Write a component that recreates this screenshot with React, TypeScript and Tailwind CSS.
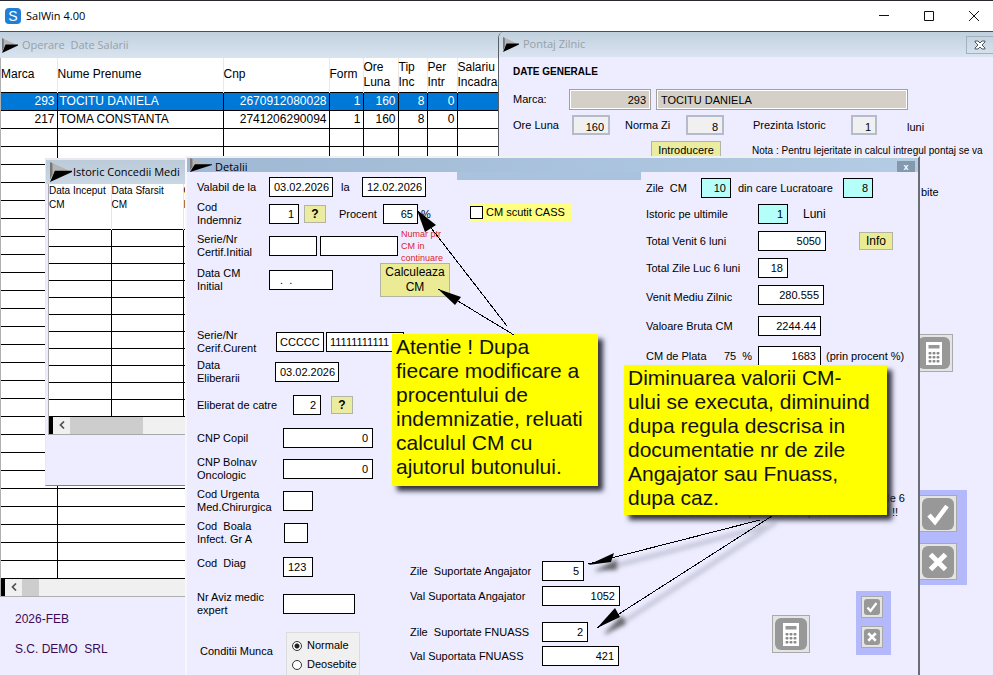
import React from "react";

const FIELD = "rounded-none border border-black bg-white text-[11px] leading-none text-black outline-none";

function Field({ label, value = "", className = "", align = "px-1 text-right" }: { label: string; value?: string; className?: string; align?: string }) {
  return <input aria-label={label} defaultValue={value} className={`${FIELD} h-5 shrink-0 ${align} ${className}`} />;
}

function Row({ className = "", children }: { className?: string; children: React.ReactNode }) {
  return <div className={`flex h-6 items-center whitespace-nowrap ${className}`}>{children}</div>;
}

function Label({ lines, className = "" }: { lines: string[]; className?: string }) {
  return (
    <div className={`shrink-0 whitespace-pre text-[11px] leading-[13px] ${className}`}>
      {lines.map((l) => (
        <div key={l}>{l}</div>
      ))}
    </div>
  );
}

function Flag({ className = "" }: { className?: string }) {
  return (
    <svg aria-hidden="true" viewBox="0 0 18 16" preserveAspectRatio="none" className={`shrink-0 ${className}`}>
      <polygon points="0,0 16,7 4,7.500 0,14" fill="#b4b4b4" />
      <polygon points="0,0 2,1 2,10 0,14" fill="#777" />
      <polygon points="0,16 4,7 18,7 18,8" fill="#000" />
    </svg>
  );
}

function CalcIcon({ className = "" }: { className?: string }) {
  return (
    <svg aria-hidden="true" viewBox="0 0 32 32" className={className}>
      <rect width="32" height="32" rx="6" fill="#989898" />
      <rect x="8" y="5" width="16" height="23" fill="#fff" />
      <rect x="10.500" y="8" width="11" height="3.500" fill="#989898" />
      {[15, 19, 23].map((y) =>
        [10.5, 14.5, 18.5].map((x) => <rect key={`${x}-${y}`} x={x} y={y} width="3" height="2.500" rx="1" fill="#8a8a8a" />)
      )}
    </svg>
  );
}

function CheckIcon({ className = "" }: { className?: string }) {
  return (
    <svg aria-hidden="true" viewBox="0 0 32 32" className={className}>
      <rect width="32" height="32" rx="6" fill="#989898" />
      <path d="M7 17 L13 24 L25 8" fill="none" stroke="#fff" strokeWidth="4.500" />
    </svg>
  );
}

function CrossIcon({ className = "" }: { className?: string }) {
  return (
    <svg aria-hidden="true" viewBox="0 0 32 32" className={className}>
      <rect width="32" height="32" rx="6" fill="#989898" />
      <path d="M8.500 8.500 L23.500 23.500 M23.500 8.500 L8.500 23.500" fill="none" stroke="#fff" strokeWidth="5" />
    </svg>
  );
}

function IconButton({ label, className = "", children }: { label: string; className?: string; children: React.ReactNode }) {
  return (
    <button aria-label={label} className={`flex shrink-0 items-center justify-center border border-[#a9a9a9] bg-[#e4e4e4] ${className}`}>
      {children}
    </button>
  );
}

function ScrollBar({ thumb }: { thumb: string }) {
  return (
    <div className="flex h-[17px] bg-[#f0f0f0]">
      <div className="w-1 shrink-0 bg-black" />
      <button aria-label="Deruleaza stanga" className="flex w-[17px] shrink-0 items-center justify-center">
        <svg aria-hidden="true" viewBox="0 0 6 8" className="h-2 w-[6px]">
          <path d="M5 0.500 L1.500 4 L5 7.500" fill="none" stroke="#505050" strokeWidth="1.700" />
        </svg>
      </button>
      <div className={`bg-[#cdcdcd] ${thumb}`} />
    </div>
  );
}

const GRID_HEAD: [string[], string][] = [
  [["Marca"], "w-[56px]"],
  [["Nume Prenume"], "w-[166px]"],
  [["Cnp"], "w-[106px]"],
  [["Form"], "w-[34px]"],
  [["Ore", "Luna"], "w-[35px]"],
  [["Tip", "Inc"], "w-[29px]"],
  [["Per", "Intr"], "w-[30px]"],
  [["Salariu", "Incadra"], "w-[60px]"],
];

const GRID_ROWS: string[][] = [
  ["293", "TOCITU DANIELA", "2670912080028", "1", "160", "8", "0", ""],
  ["217", "TOMA CONSTANTA", "2741206290094", "1", "160", "8", "0", ""],
  ...Array.from({ length: 25 }, () => Array(8).fill("")),
];

function EmployeesWindow() {
  return (
    <section className="absolute left-0 top-0 w-[516px]">
      <header className="flex h-[26px] items-center gap-1 bg-linear-to-b from-[#c1d0de] to-[#d9e4f0] pl-[2px]">
        <Flag className="h-[15px] w-4" />
        <h2 className="whitespace-pre font-['Open_Sans','Noto_Sans',sans-serif] text-[11px] text-[#97a0a8]">Operare  Date Salarii</h2>
      </header>
      <div className="border-b border-l border-[#b0b0b0]">
        <table className="w-full table-fixed border-collapse bg-white">
          <thead>
            <tr className="h-[34px] border-b border-black">
              {GRID_HEAD.map(([lines, w]) => (
                <th key={lines[0]} className={`${w} border-r border-[#f0e4e4] p-0 text-left text-[12px] font-normal leading-[15px]`}>
                  {lines.map((l) => (
                    <div key={l}>{l}</div>
                  ))}
                </th>
              ))}
            </tr>
          </thead>
          <tbody>
            {GRID_ROWS.map((r, i) => (
              <tr key={i} className={`h-[18px] ${i === 0 ? "bg-[#0078d7] text-white" : ""}`}>
                {r.map((c, j) => (
                  <td key={j} className={`whitespace-nowrap border-b border-r border-black p-0 px-[2px] text-[12px] leading-[17px] ${j === 1 ? "text-left" : "text-right"}`}>
                    {c}
                  </td>
                ))}
              </tr>
            ))}
          </tbody>
        </table>
        <ScrollBar thumb="w-[17px]" />
      </div>
      <div className="flex flex-col gap-[15px] pl-[15px] pt-[15px] text-[12px] leading-[15px] text-[#3d0a52]">
        <p>2026-FEB</p>
        <p className="whitespace-pre">S.C. DEMO  SRL</p>
      </div>
    </section>
  );
}

function TimesheetWindow() {
  const box = "border-2 border-[#b4bccb] bg-[#f0f0f0] text-right text-[11px] h-5 px-1 pt-1 outline-none";
  return (
    <section className="absolute bottom-0 left-[498px] right-0 top-0 rounded-tl-md border-l border-[#5a5f66] bg-[#ededff]">
      <header className="flex h-[25px] items-center gap-1 rounded-tl-md bg-linear-to-b from-[#c1d0de] to-[#d9e4f0] pl-1">
        <Flag className="h-[15px] w-4" />
        <h2 className="font-['Open_Sans','Noto_Sans',sans-serif] text-[11px] text-[#97a0a8]">Pontaj Zilnic</h2>
        <button aria-label="Inchide Pontaj" className="ml-auto flex h-[18px] w-[27px] items-center justify-center border border-r-0 border-[#a3b1bf]">
          <svg aria-hidden="true" viewBox="0 0 12 10" className="h-[10px] w-3">
            <path d="M1 1 H4 L6 3 L8 1 H11 V2 L8 5 L11 8 V9 H8 L6 7 L4 9 H1 V8 L4 5 L1 2 Z" fill="#fff" stroke="#4f565e" />
          </svg>
        </button>
      </header>
      <div className="pl-[14px] pt-2 text-[11px] leading-[13px]">
        <h3 className="text-[10px] font-bold">DATE GENERALE</h3>
        <div className="mt-[11px] flex items-center">
          <label htmlFor="marca" className="w-[56px]">Marca:</label>
          <input id="marca" readOnly defaultValue="293" className="h-[21px] w-[82px] border border-[#a0a0a0] bg-[#d4d0c8] px-1 text-right outline outline-1 -outline-offset-2 outline-white" />
          <input aria-label="Nume" readOnly defaultValue="TOCITU DANIELA" className="ml-[5px] h-[21px] w-[252px] border border-[#a0a0a0] bg-[#d4d0c8] px-1 outline outline-1 -outline-offset-2 outline-white" />
        </div>
        <div className="mt-[5px] flex h-5 items-center whitespace-nowrap">
          <label htmlFor="ore" className="w-[59px]">Ore Luna</label>
          <input id="ore" defaultValue="160" className={`w-[38px] ${box}`} />
          <label htmlFor="norma" className="ml-[15px] w-[61px]">Norma Zi</label>
          <input id="norma" defaultValue="8" className={`w-[38px] ${box}`} />
          <label htmlFor="istoric" className="ml-[29px] w-[98px]">Prezinta Istoric</label>
          <input id="istoric" defaultValue="1" className={`w-[26px] ${box}`} />
          <span className="ml-[30px] pt-1">luni</span>
        </div>
        <div className="mt-[6px] flex items-center whitespace-nowrap pl-[138px]">
          <button className="h-[18px] w-[70px] shrink-0 border border-[#b4b4a4] bg-[#ececa0]">Introducere</button>
          <span className="ml-[31px] text-[10px]">Nota : Pentru lejeritate in calcul intregul pontaj se va</span>
        </div>
        <p className="mt-[27px] pl-[408px]">bite</p>
      </div>
      <div className="mt-[135px] flex flex-col items-start pl-[416px]">
        <IconButton label="Calculator pontaj" className="h-[38px] w-[38px]">
          <CalcIcon className="h-8 w-8" />
        </IconButton>
        <div className="mt-[118px] flex w-[52px] flex-col gap-[11px] bg-[#b3b9fb] py-[5px] pl-1">
          <IconButton label="Confirma pontaj" className="h-[37px] w-[38px]">
            <CheckIcon className="h-8 w-8" />
          </IconButton>
          <IconButton label="Anuleaza pontaj" className="h-[37px] w-[38px]">
            <CrossIcon className="h-8 w-8" />
          </IconButton>
        </div>
      </div>
    </section>
  );
}

function HistoryWindow() {
  return (
    <section className="absolute left-[45px] top-[126px] w-[152px] border border-t-2 border-[#e8e8ee] border-b-[#808080] bg-[#ededff] pb-[50px] pl-[2px]">
      <header className="-ml-[2px] flex h-6 items-center gap-px bg-linear-to-b from-[#bccbd9] to-[#c9d6e3] pl-1">
        <Flag className="h-5 w-[22px]" />
        <h2 className="whitespace-nowrap font-['Open_Sans','Noto_Sans',sans-serif] text-[11px]">Istoric Concedii Medi</h2>
      </header>
      <div className="border-b border-l border-[#a8a8a8] bg-white">
        <table className="w-full table-fixed border-collapse">
          <thead>
            <tr className="h-[45px] border-b border-black align-top">
              <th className="w-[62px] whitespace-nowrap border-r border-[#e8e4e4] p-0 text-left text-[10px] font-normal leading-[14px]">Data Inceput<br />CM</th>
              <th className="w-[72px] whitespace-nowrap border-r border-[#e8e4e4] p-0 text-left text-[10px] font-normal leading-[14px]">Data Sfarsit<br />CM</th>
              <th className="p-0 text-left text-[10px] font-normal leading-[14px]">C<br />I</th>
            </tr>
          </thead>
          <tbody>
            {Array.from({ length: 11 }, (_, i) => (
              <tr key={i} className="h-[17px]">
                <td className="border-b border-r border-black p-0" />
                <td className="border-b border-r border-black p-0" />
                <td className="border-b border-black p-0" />
              </tr>
            ))}
          </tbody>
        </table>
        <ScrollBar thumb="w-[73px]" />
      </div>
    </section>
  );
}

function HelpButton() {
  return <button aria-label="Ajutor" className="h-[18px] w-[22px] border border-[#b4b4a4] bg-[#ececa0] text-[12px] font-bold leading-none">?</button>;
}

function DetailWindow() {
  return (
    <section className="absolute bottom-0 left-[185px] top-[124px] w-[735px] overflow-hidden border-l-2 border-r-2 border-t-2 border-l-[#f6f6fc] border-r-[#6b6d75] border-t-[#f0f0f0] bg-[#ededff]">
      <header className="flex h-[14px] bg-linear-to-r from-[#9fb8d3] to-[#b4cce4] pl-[3px]">
        <Flag className="h-[14px] w-[22px]" />
        <h2 className="ml-[3px] font-['Open_Sans','Noto_Sans',sans-serif] text-[11px] leading-[18px]">Detalii</h2>
        <button aria-label="Inchide Detalii" className="ml-auto mr-[3px] mt-[3px] h-[11px] w-[18px] bg-[#8499ac] text-[9px] font-bold leading-[10px] text-white">x</button>
      </header>

      <div className="flex h-[378px]">
        <div className="w-[270px] shrink-0 pl-[10px]">
          <Row className="mt-[3px]">
            <Label lines={["Valabil de la"]} className="w-[72px]" />
            <Field label="Valabil de la" value="03.02.2026" align="pl-1" className="w-[64px]" />
            <Label lines={["la"]} className="ml-2 w-[21px]" />
            <Field label="Valabil pana la" value="12.02.2026" align="pl-1" className="w-[64px]" />
          </Row>
          <Row className="mt-[3px]">
            <Label lines={["Cod", "Indemniz"]} className="w-[72px]" />
            <Field label="Cod indemnizatie" value="1" className="mr-[5px] w-[30px]" />
            <HelpButton />
            <Label lines={["Procent"]} className="ml-[13px] w-[44px]" />
            <Field label="Procent" value="65" className="w-[35px]" />
            <Label lines={["%"]} className="ml-[3px]" />
          </Row>
          <Row className="mt-2">
            <Label lines={["Serie/Nr", "Certif.Initial"]} className="w-[72px]" />
            <Field label="Serie certificat initial" className="w-12" />
            <Field label="Numar certificat initial" className="ml-[3px] w-[78px]" />
            <p className="ml-[3px] text-[9px] leading-3 text-[#e0202c]">Numar ptr<br />CM in<br />continuare</p>
          </Row>
          <Row className="mt-[10px]">
            <Label lines={["Data CM", "Initial"]} className="w-[72px]" />
            <Field label="Data CM initial" value="  .  ." align="pl-1" className="w-[64px]" />
            <button className="ml-[47px] h-[34px] w-[70px] shrink-0 border border-[#b4b4a4] bg-[#ebeb96] text-[12px] leading-[15px]">Calculeaza<br />CM</button>
          </Row>
          <Row className="mt-[38px]">
            <Label lines={["Serie/Nr", "Cerif.Curent"]} className="w-[79px]" />
            <Field label="Serie certificat curent" value="CCCCC" align="pl-[3px]" className="w-12" />
            <Field label="Numar certificat curent" value="11111111111" align="pl-[3px]" className="ml-[2px] w-[78px]" />
          </Row>
          <Row className="mt-[6px]">
            <Label lines={["Data", "Eliberarii"]} className="w-[78px]" />
            <Field label="Data eliberarii" value="03.02.2026" align="pl-1" className="w-[64px]" />
          </Row>
          <Row className="mt-[9px]">
            <Label lines={["Eliberat de catre"]} className="w-24" />
            <Field label="Eliberat de catre" value="2" className="mr-[10px] w-7" />
            <HelpButton />
          </Row>
          <Row className="mt-[9px]">
            <Label lines={["CNP Copil"]} className="w-[86px]" />
            <Field label="CNP Copil" value="0" className="w-[90px]" />
          </Row>
          <Row className="mt-[7px]">
            <Label lines={["CNP Bolnav", "Oncologic"]} className="w-[86px]" />
            <Field label="CNP Bolnav Oncologic" value="0" className="w-[90px]" />
          </Row>
          <Row className="mt-2">
            <Label lines={["Cod Urgenta", "Med.Chirurgica"]} className="w-[86px]" />
            <Field label="Cod Urgenta" className="w-[30px]" />
          </Row>
          <Row className="mt-2">
            <Label lines={["Cod  Boala", "Infect. Gr A"]} className="w-[87px]" />
            <Field label="Cod Boala" className="w-6" />
          </Row>
        </div>

        <div className="w-[188px] shrink-0">
          <div className="h-2 w-[184px] bg-[#a9c2dd]" />
          <label className="ml-[13px] mt-6 flex h-[17px] w-[101px] items-center gap-[3px] whitespace-nowrap bg-[#ffff80] text-[11px]">
            <input type="checkbox" className="h-[13px] w-[13px] shrink-0 appearance-none border border-black bg-white" />
            CM scutit CASS
          </label>
        </div>

        <div className="flex-1 pl-px">
          <Row className="mt-1">
            <Label lines={["Zile  CM"]} className="w-[55px]" />
            <Field label="Zile CM" value="10" className="w-[30px] bg-[#b4fffa]!" />
            <Label lines={["din care Lucratoare"]} className="ml-[7px] w-[105px]" />
            <Field label="Zile lucratoare" value="8" className="w-[30px] bg-[#b4fffa]!" />
          </Row>
          <Row className="mt-[2px]">
            <Label lines={["Istoric pe ultimile"]} className="w-[112px]" />
            <Field label="Istoric luni" value="1" className="w-[30px] bg-[#b4fffa]!" />
            <span className="ml-[15px] text-[12px]">Luni</span>
          </Row>
          <Row className="mt-[3px]">
            <Label lines={["Total Venit 6 luni"]} className="w-[112px]" />
            <Field label="Total Venit 6 luni" value="5050" className="w-[68px]" />
            <button className="ml-[33px] h-[18px] w-[34px] border border-[#b4b4a4] bg-[#ebeb96] text-[12px] leading-none">Info</button>
          </Row>
          <Row className="mt-[3px]">
            <Label lines={["Total Zile Luc 6 luni"]} className="w-[112px]" />
            <Field label="Total Zile Luc 6 luni" value="18" className="w-[30px]" />
          </Row>
          <Row className="mt-[3px]">
            <Label lines={["Venit Mediu Zilnic"]} className="w-[112px] pt-1" />
            <Field label="Venit Mediu Zilnic" value="280.555" className="w-[66px]" />
          </Row>
          <Row className="mt-[7px]">
            <Label lines={["Valoare Bruta CM"]} className="w-[112px]" />
            <Field label="Valoare Bruta CM" value="2244.44" className="w-[63px]" />
          </Row>
          <Row className="mt-[6px]">
            <Label lines={["CM de Plata"]} className="w-[78px]" />
            <Label lines={["75  %"]} className="w-[34px]" />
            <Field label="CM de Plata" value="1683" className="w-[63px]" />
            <Label lines={["(prin procent %)"]} className="ml-[5px]" />
          </Row>
          <p className="mr-[13px] mt-[123px] whitespace-nowrap text-right text-[11px] leading-[14px]">
            de 6
            <span className="mr-[7px] block">luni istoric incomplet, se completeaza manual !!</span>
          </p>
        </div>
      </div>

      <div className="flex">
        <div className="w-[223px] shrink-0 pl-[10px]">
          <Row className="mt-[5px]">
            <Label lines={["Cod  Diag"]} className="w-[86px] pb-2" />
            <Field label="Cod Diag" value="123" align="pl-1" className="w-[30px]" />
          </Row>
          <Row className="mt-[13px]">
            <Label lines={["Nr Aviz medic", "expert"]} className="w-[86px]" />
            <Field label="Nr Aviz medic expert" className="w-[72px]" />
          </Row>
          <div className="mt-[16px] flex">
            <span className="w-[89px] whitespace-nowrap pl-[3px] pt-[13px] text-[11px] leading-[13px]">Conditii Munca</span>
            <fieldset className="h-[50px] w-[74px] border border-[#dcdcdc] bg-[#f0f0f0] pl-[5px] pt-[3px] text-[11px]">
              <label className="flex h-[19px] items-center gap-[5px]">
                <input type="radio" name="conditii" defaultChecked className="h-[10px] w-[10px] shrink-0 appearance-none rounded-full border border-[#333] bg-white checked:bg-[radial-gradient(circle,#222_0_2px,#fff_3px)]" />
                Normale
              </label>
              <label className="flex h-[19px] items-center gap-[5px]">
                <input type="radio" name="conditii" className="h-[10px] w-[10px] shrink-0 appearance-none rounded-full border border-[#333] bg-white" />
                Deosebite
              </label>
            </fieldset>
          </div>
        </div>
        <div className="w-[362px] shrink-0 pt-[9px]">
          <Row>
            <Label lines={["Zile  Suportate Angajator"]} className="w-[132px]" />
            <Field label="Zile Suportate Angajator" value="5" className="w-[42px]" />
          </Row>
          <Row className="mt-px">
            <Label lines={["Val Suportata Angajator"]} className="w-[132px]" />
            <Field label="Val Suportata Angajator" value="1052" className="w-[78px]" />
          </Row>
          <Row className="mt-3">
            <Label lines={["Zile  Suportate FNUASS"]} className="w-[132px]" />
            <Field label="Zile Suportate FNUASS" value="2" className="w-[46px]" />
          </Row>
          <Row>
            <Label lines={["Val Suportata FNUASS"]} className="w-[132px]" />
            <Field label="Val Suportata FNUASS" value="421" className="w-[77px]" />
          </Row>
        </div>
        <IconButton label="Calculator" className="mt-[65px] h-[38px] w-[38px]">
          <CalcIcon className="h-8 w-8" />
        </IconButton>
        <div className="ml-[46px] mt-[41px] flex h-16 w-[35px] flex-col gap-2 bg-[#b3b9fb] pl-[5px] pt-[5px]">
          <IconButton label="Confirma" className="h-[22px] w-[22px]">
            <CheckIcon className="h-4 w-4" />
          </IconButton>
          <IconButton label="Anuleaza" className="h-[22px] w-[22px]">
            <CrossIcon className="h-4 w-4" />
          </IconButton>
        </div>
      </div>
    </section>
  );
}

function Note({ lines, className }: { lines: string[]; className: string }) {
  return (
    <aside className={`absolute whitespace-nowrap bg-[#ffff00] pl-1 pt-px text-[21px] leading-6 text-[#111] shadow-[5px_5px_5px_#333344] ${className}`}>
      {lines.map((l) => (
        <div key={l}>{l}</div>
      ))}
    </aside>
  );
}

function Arrows() {
  return (
    <svg aria-hidden="true" viewBox="0 0 400 480" className="pointer-events-none absolute left-[400px] top-[168px] h-[480px] w-[400px]">
      <defs>
        <filter id="soft" x="-20%" y="-20%" width="140%" height="140%">
          <feGaussianBlur stdDeviation="2" />
        </filter>
      </defs>
      <g filter="url(#soft)">
        <path d="M195 371 L366 326 M205 434 L376 322" stroke="#70708c" strokeOpacity="0.300" strokeWidth="5" />
        <polygon points="196,370 217,370 217,359" fill="#333" fillOpacity="0.700" />
        <polygon points="204,434 226,424 222,415" fill="#333" fillOpacity="0.700" />
      </g>
      <g fill="none" stroke="#000" shapeRendering="crispEdges">
        <path d="M107 126 L18 11" />
        <path d="M114 135 L38 89" />
        <path d="M360 320 L188 364" />
        <path d="M372 316 L197 428" />
      </g>
      <g fill="#000">
        <polygon points="17,10 25,32 36,25" />
        <polygon points="38,89 55,105 61,97" />
        <polygon points="188,365 211,362 214,353" />
        <polygon points="197,428 220,417 215,408" />
      </g>
    </svg>
  );
}

export default function App() {
  return (
    <div className="flex min-h-screen flex-col overflow-hidden bg-[#ededff] font-['Liberation_Sans',Arial,sans-serif] text-black">
      <div className="h-px bg-[#2c2830]" />
      <header className="flex h-[30px] items-center bg-white">
        <span className="ml-[5px] flex h-4 w-4 items-center justify-center rounded-sm bg-[#1d7fd6] text-[14px] leading-none text-white">S</span>
        <h1 className="ml-[5px] font-['Open_Sans','Noto_Sans',sans-serif] text-[11px]">SalWin 4.00</h1>
        <div className="ml-auto flex gap-[7px]">
          {["M1 5.500 H11", "M1.500 1.500 H10.500 V10.500 H1.500 Z", "M1 1 L11 11 M11 1 L1 11"].map((d, i) => (
            <button key={d} aria-label={["Minimizeaza", "Maximizeaza", "Inchide"][i]} className="flex h-[30px] w-[38px] items-center justify-center">
              <svg aria-hidden="true" viewBox="0 0 12 12" className="h-3 w-3">
                <path d={d} fill="none" stroke="#111" />
              </svg>
            </button>
          ))}
        </div>
      </header>
      <main className="relative flex-1 overflow-hidden border-t border-[#4c4c54]">
        <EmployeesWindow />
        <TimesheetWindow />
        <HistoryWindow />
        <DetailWindow />
        <Note
          className="left-[392px] top-[302px] h-[152px] w-[206px]"
          lines={["Atentie ! Dupa", "fiecare modificare a", "procentului de", "indemnizatie, reluati", "calculul CM cu", "ajutorul butonului."]}
        />
        <Note
          className="left-[624px] top-[333px] h-[150px] w-[263px]"
          lines={["Diminuarea valorii CM-", "ului se executa, diminuind", "dupa regula descrisa in", "documentatie nr de zile", "Angajator sau Fnuass,", "dupa caz."]}
        />
        <Arrows />
      </main>
    </div>
  );
}
